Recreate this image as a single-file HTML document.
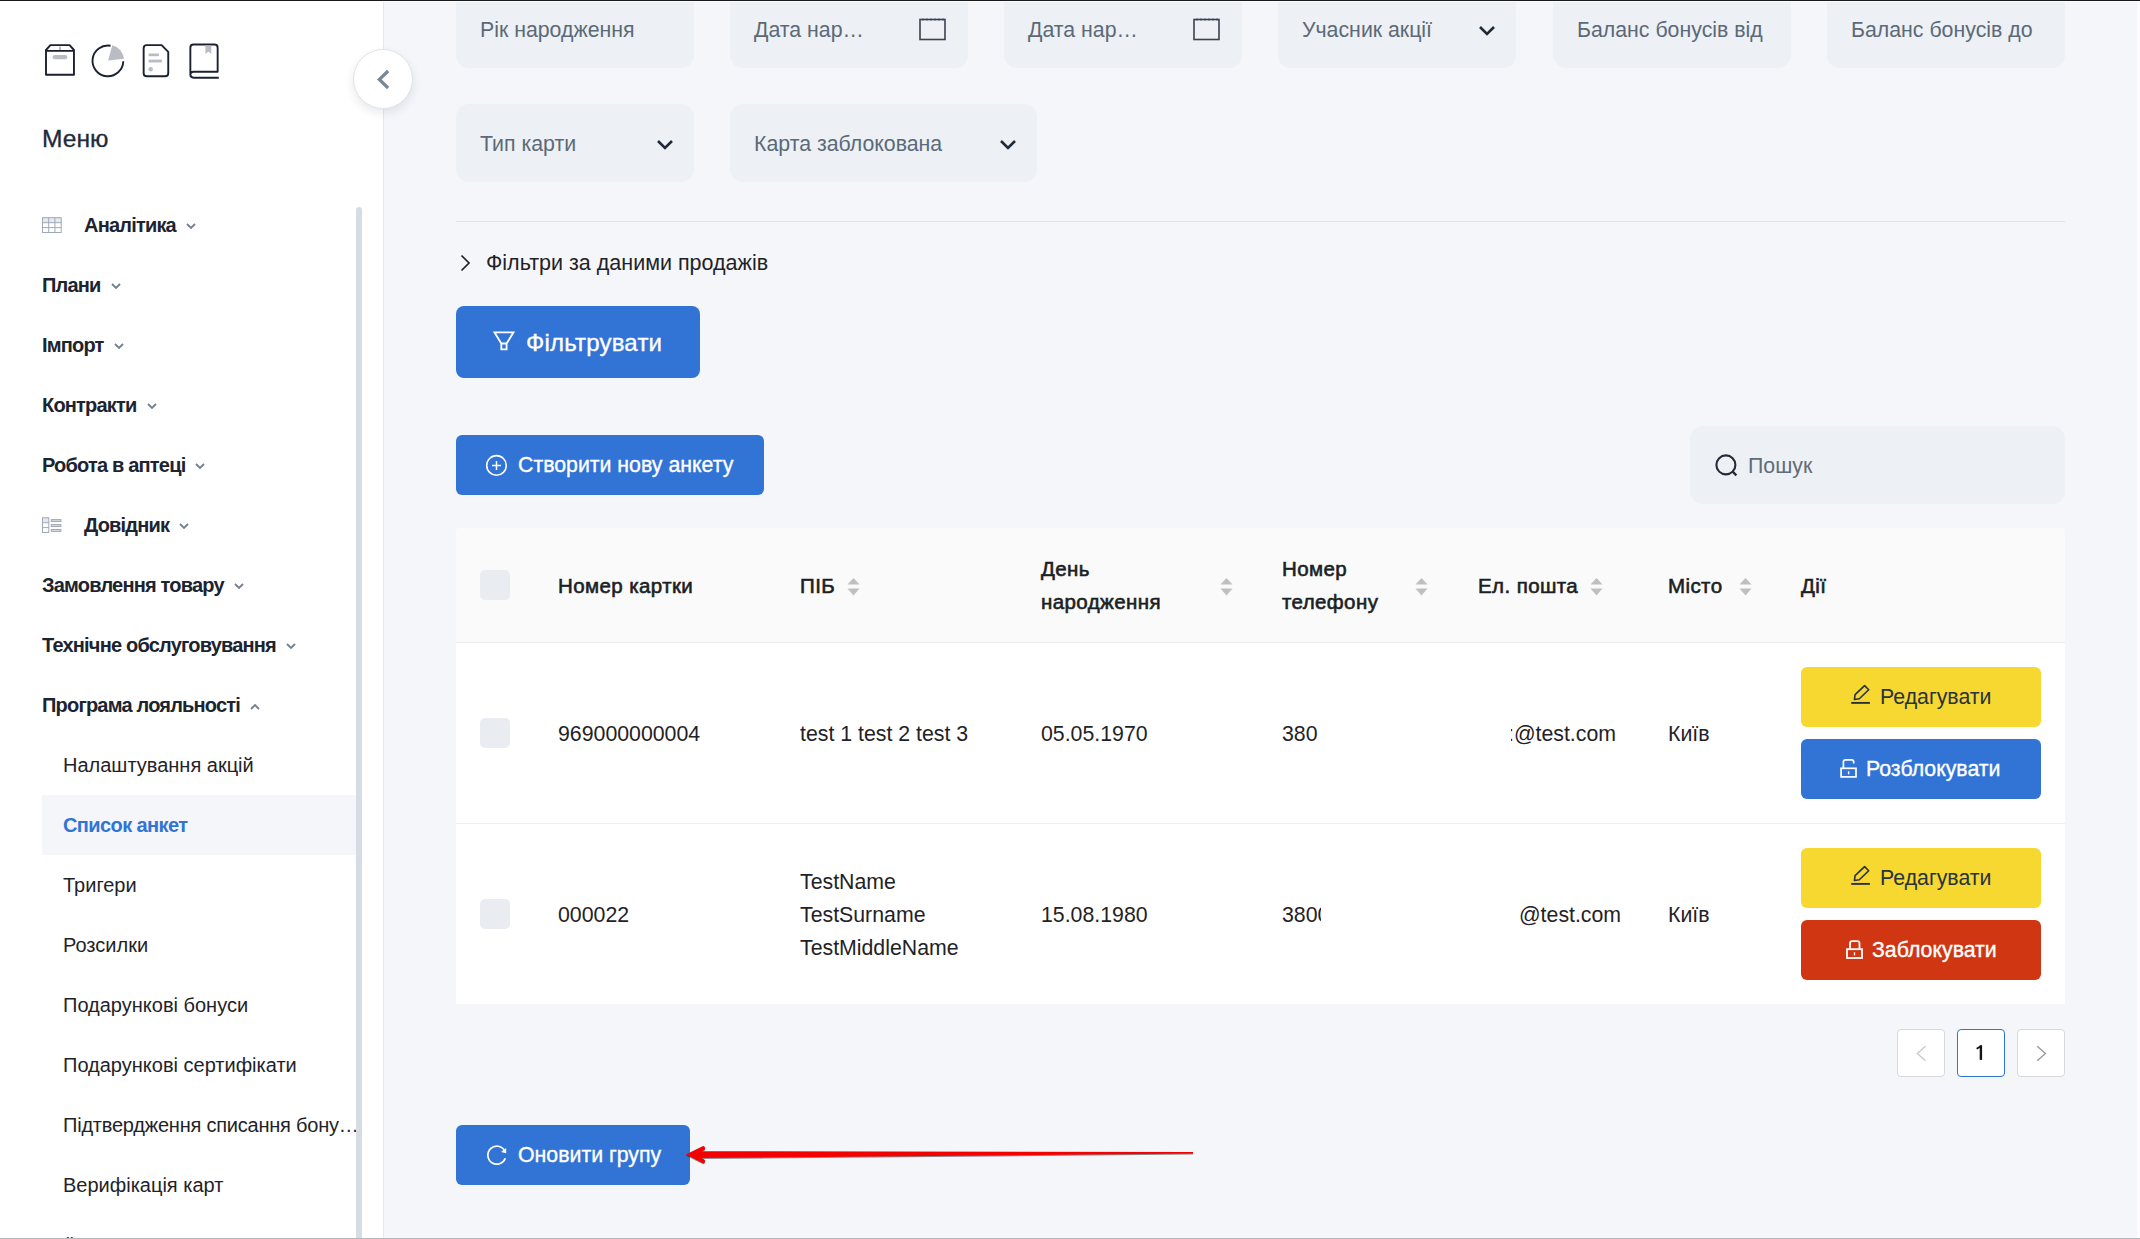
<!DOCTYPE html>
<html><head><meta charset="utf-8">
<style>
*{box-sizing:border-box;margin:0;padding:0}
html,body{width:2140px;height:1239px;overflow:hidden;background:#f5f6fa;font-family:"Liberation Sans",sans-serif;color:#1c2230}
.abs{position:absolute}
#topline{position:absolute;left:0;top:0;width:2140px;height:1px;background:#1a1a1a;z-index:50}
#topline2{position:absolute;left:0;top:1px;width:2140px;height:1px;background:#fbfcfd;z-index:50}
#botline{position:absolute;left:0;top:1238px;width:2140px;height:1px;background:#b4b8bd;z-index:50}
#rightstrip{position:absolute;left:2137px;top:0;width:3px;height:1239px;background:#fcfcfc;z-index:40}
#sidebar{position:absolute;left:0;top:0;width:383px;height:1239px;background:#fff;border-right:1px solid #e3e8ee;width:384px}
.mi{position:absolute;left:42px;font-size:20px;font-weight:700;letter-spacing:-0.8px;color:#1c2430;white-space:nowrap;line-height:24px}
.sub{position:absolute;left:63px;font-size:20px;font-weight:400;color:#1f2328;white-space:nowrap;line-height:24px}
.cv{margin-left:10px;vertical-align:middle;position:relative;top:0px}
.chev{display:inline-block;width:7px;height:7px;border-right:1.6px solid #7d8896;border-bottom:1.6px solid #7d8896;transform:rotate(45deg);margin-left:12px;position:relative;top:-5px}
.chev.up{transform:rotate(-135deg);top:1px}
#scroll{position:absolute;left:356px;top:207px;width:6px;height:1040px;background:#d5dce4;border-radius:3px}
#collapse{position:absolute;left:353px;top:49px;width:60px;height:60px;border-radius:50%;background:#fff;border:1px solid #dfe5ec;box-shadow:0 4px 10px rgba(30,40,60,0.10);z-index:10}
.field{position:absolute;background:#edf0f4;border-radius:13px;height:78px;width:238px;color:#5b6978;font-size:21.3px;white-space:nowrap}
.field span{position:absolute;left:24px;top:28px;line-height:24px}
.btn{position:absolute;background:#3174d6;color:#fff;border-radius:7px;white-space:nowrap;-webkit-text-stroke:0.35px #fff}
.th{position:absolute;font-size:20.5px;font-weight:400;letter-spacing:0.4px;-webkit-text-stroke:0.6px #1b1f24;color:#1b1f24;white-space:nowrap;line-height:33px}
.td{position:absolute;font-size:21.3px;color:#1f2226;white-space:nowrap;line-height:33px}
.cb{position:absolute;left:480px;width:30px;height:30px;background:#e9ecf0;border-radius:5px}
.sort{position:absolute;width:12px;height:20px}
.abtn{position:absolute;left:1801px;width:240px;height:60px;border-radius:6px;font-size:21.3px;white-space:nowrap;text-align:center;line-height:60px}
.pg{position:absolute;top:1029px;width:48px;height:48px;background:#fff;border:1px solid #d9d9d9;border-radius:4px}
</style></head>
<body>
<div id="topline"></div><div id="topline2"></div><div id="botline"></div><div id="rightstrip"></div>

<!-- SIDEBAR -->
<div id="sidebar">
<svg class="abs" style="left:0;top:0" width="240" height="90" viewBox="0 0 240 90">
 <g fill="none" stroke="#1a2230" stroke-width="1.9" stroke-linejoin="round">
  <path d="M46 50 L50.4 45.15 H69.6 L73.95 50 V74.75 H46 Z M46 50.85 H73.95"/>
  <path d="M110.6 45.7 A15.4 15.4 0 1 0 123.3 61.3"/>
  <path d="M143.65 48.2 Q143.65 45.15 146.7 45.15 H161.6 L168.25 51.9 V73.2 Q168.25 76.25 165.2 76.25 H146.7 Q143.65 76.25 143.65 73.2 Z"/>
  <path d="M218.8 77.7 H193.6 Q190.35 77.7 190.35 74.6 V47.7 Q190.35 44.55 193.5 44.55 H214.5 Q217.65 44.55 217.65 47.7 V71.8 H193.6 Q190.35 71.8 190.35 74.6"/>
 </g>
 <g fill="#b9bdc3">
  <rect x="52.6" y="55.1" width="14.7" height="4.2" rx="2.1"/>
  <rect x="59" y="46.6" width="2" height="3.4"/>
  <path d="M108.1 60.6 L112.3 45.3 A16 16 0 0 1 124.1 58.7 Z"/>
  <rect x="148.6" y="53.5" width="10.3" height="2.7"/>
  <rect x="148.6" y="59.6" width="13.3" height="2.9"/>
  <circle cx="150.7" cy="69.2" r="2.2"/>
  <path d="M205.4 45.5 H211.3 V54.1 L208.35 51.6 L205.4 54.1 Z"/>
 </g>
</svg>
<div class="abs" style="left:42px;top:124px;font-size:24.6px;line-height:30px;color:#1f2a3a;-webkit-text-stroke:0.3px #1f2a3a;white-space:nowrap">Меню</div>

<svg class="abs" style="left:40px;top:215px" width="24" height="20" viewBox="40 215 24 20">
 <rect x="42.5" y="217.7" width="18.7" height="4.8" fill="#e6e9ee"/>
 <g fill="none" stroke="#a0a9b6" stroke-width="1">
  <rect x="42.5" y="217.7" width="18.7" height="14.8"/>
  <path d="M48.7 217.7 V232.5 M54.9 217.7 V232.5 M42.5 222.7 H61.2 M42.5 227.6 H61.2"/>
 </g>
</svg>
<div class="mi" style="left:84px;top:213px">Аналітика<svg class="cv" width="10" height="7" viewBox="0 0 10 7"><path d="M1 1 L5 5 L9 1" fill="none" stroke="#758190" stroke-width="1.9"/></svg></div>
<div class="mi" style="top:273px">Плани<svg class="cv" width="10" height="7" viewBox="0 0 10 7"><path d="M1 1 L5 5 L9 1" fill="none" stroke="#758190" stroke-width="1.9"/></svg></div>
<div class="mi" style="top:333px">Імпорт<svg class="cv" width="10" height="7" viewBox="0 0 10 7"><path d="M1 1 L5 5 L9 1" fill="none" stroke="#758190" stroke-width="1.9"/></svg></div>
<div class="mi" style="top:393px">Контракти<svg class="cv" width="10" height="7" viewBox="0 0 10 7"><path d="M1 1 L5 5 L9 1" fill="none" stroke="#758190" stroke-width="1.9"/></svg></div>
<div class="mi" style="top:453px">Робота в аптеці<svg class="cv" width="10" height="7" viewBox="0 0 10 7"><path d="M1 1 L5 5 L9 1" fill="none" stroke="#758190" stroke-width="1.9"/></svg></div>
<svg class="abs" style="left:40px;top:515px" width="24" height="20" viewBox="40 515 24 20">
 <rect x="42.5" y="517.8" width="6.3" height="4.8" fill="#e6e9ee"/>
 <g fill="none" stroke="#a0a9b6" stroke-width="1">
  <rect x="42.5" y="517.8" width="6.3" height="14.7"/>
  <path d="M42.5 522.7 H48.8 M42.5 527.6 H48.8"/>
  <rect x="51.3" y="519.6" width="9.6" height="1.9" fill="#d5dae1"/>
  <rect x="51.3" y="524.6" width="9.6" height="1.9" fill="#d5dae1"/>
  <rect x="51.3" y="529.5" width="9.6" height="1.9" fill="#d5dae1"/>
 </g>
</svg>
<div class="mi" style="left:84px;top:513px">Довідник<svg class="cv" width="10" height="7" viewBox="0 0 10 7"><path d="M1 1 L5 5 L9 1" fill="none" stroke="#758190" stroke-width="1.9"/></svg></div>
<div class="mi" style="top:573px">Замовлення товару<svg class="cv" width="10" height="7" viewBox="0 0 10 7"><path d="M1 1 L5 5 L9 1" fill="none" stroke="#758190" stroke-width="1.9"/></svg></div>
<div class="mi" style="top:633px">Технічне обслуговування<svg class="cv" width="10" height="7" viewBox="0 0 10 7"><path d="M1 1 L5 5 L9 1" fill="none" stroke="#758190" stroke-width="1.9"/></svg></div>
<div class="mi" style="top:693px">Програма лояльності<svg class="cv" width="10" height="7" viewBox="0 0 10 7"><path d="M1 6 L5 2 L9 6" fill="none" stroke="#758190" stroke-width="1.9"/></svg></div>
<div class="sub" style="top:753px">Налаштування акцій</div>
<div class="abs" style="left:42px;top:795px;width:314px;height:60px;background:#f5f6fa"></div>
<div class="sub" style="top:813px;color:#3174d6;font-weight:700;letter-spacing:-0.6px">Список анкет</div>
<div class="sub" style="top:873px">Тригери</div>
<div class="sub" style="top:933px">Розсилки</div>
<div class="sub" style="top:993px">Подарункові бонуси</div>
<div class="sub" style="top:1053px">Подарункові сертифікати</div>
<div class="sub" style="top:1113px;letter-spacing:-0.22px">Підтвердження списання бону…</div>
<div class="sub" style="top:1173px">Верифікація карт</div>
<div class="sub" style="top:1235px;left:67px">Їжа</div>
</div>
<div id="scroll"></div>
<div id="collapse"><svg class="abs" style="left:0;top:0" width="60" height="60" viewBox="354 50 60 60"><path d="M388.1 71 L379.3 79.5 L388.1 88" fill="none" stroke="#7a8796" stroke-width="3.2"/></svg></div>

<!-- MAIN -->
<div id="main">
<div class="field" style="left:456px;top:-10px"><span>Рік народження</span></div>
<div class="field" style="left:730px;top:-10px"><span>Дата нар…</span><div class="abs" style="left:189px;top:27px"><svg class="abs" width="28" height="24" viewBox="0 0 28 24"><rect x="1" y="2.5" width="25" height="20" fill="none" stroke="#3a4350" stroke-width="1.6"/><path d="M4 1.5 V3.5 M8 1.5 V3.5 M12 1.5 V3.5 M16 1.5 V3.5 M20 1.5 V3.5 M24 1.5 V3.5" stroke="#3a4350" stroke-width="1.2"/></svg></div></div>
<div class="field" style="left:1004px;top:-10px"><span>Дата нар…</span><div class="abs" style="left:189px;top:27px"><svg class="abs" width="28" height="24" viewBox="0 0 28 24"><rect x="1" y="2.5" width="25" height="20" fill="none" stroke="#3a4350" stroke-width="1.6"/><path d="M4 1.5 V3.5 M8 1.5 V3.5 M12 1.5 V3.5 M16 1.5 V3.5 M20 1.5 V3.5 M24 1.5 V3.5" stroke="#3a4350" stroke-width="1.2"/></svg></div></div>
<div class="field" style="left:1278px;top:-10px"><span>Учасник акції</span><div class="abs" style="left:200px;top:35px"><svg class="abs" width="18" height="12" viewBox="0 0 18 12"><path d="M2 2 L9 9 L16 2" fill="none" stroke="#1f2a38" stroke-width="2.6"/></svg></div></div>
<div class="field" style="left:1553px;top:-10px"><span>Баланс бонусів від</span></div>
<div class="field" style="left:1827px;top:-10px"><span>Баланс бонусів до</span></div>
<div class="field" style="left:456px;top:104px"><span>Тип карти</span><div class="abs" style="left:200px;top:35px"><svg class="abs" width="18" height="12" viewBox="0 0 18 12"><path d="M2 2 L9 9 L16 2" fill="none" stroke="#1f2a38" stroke-width="2.6"/></svg></div></div>
<div class="field" style="left:730px;top:104px;width:307px"><span>Карта заблокована</span><div class="abs" style="left:269px;top:35px"><svg class="abs" width="18" height="12" viewBox="0 0 18 12"><path d="M2 2 L9 9 L16 2" fill="none" stroke="#1f2a38" stroke-width="2.6"/></svg></div></div>
<div class="abs" style="left:456px;top:221px;width:1609px;height:1px;background:#dfe3e8"></div>
<svg class="abs" style="left:456px;top:253px" width="20" height="20" viewBox="0 0 20 20"><path d="M5.5 2.5 L13 10 L5.5 17.5" fill="none" stroke="#1f2226" stroke-width="1.7"/></svg>
<div class="abs" style="left:486px;top:250px;font-size:21.5px;line-height:26px;color:#1f2226;white-space:nowrap">Фільтри за даними продажів</div>

<div class="btn" style="left:456px;top:306px;width:244px;height:72px;border-radius:8px">
 <svg class="abs" style="left:0;top:0" width="244" height="72" viewBox="456 306 244 72"><path d="M494.5 332.3 H513.5 L506.6 343.5 V349.3 H501.3 V343.5 Z M501.3 343.5 H506.6" fill="none" stroke="#fff" stroke-width="1.8" stroke-linejoin="miter"/></svg>
 <div class="abs" style="left:70px;top:22px;font-size:24px;line-height:30px;letter-spacing:0.2px">Фільтрувати</div>
</div>
<div class="btn" style="left:456px;top:435px;width:308px;height:60px;border-radius:6px">
 <svg class="abs" style="left:0;top:0" width="60" height="60" viewBox="456 435 60 60"><circle cx="496.5" cy="465.4" r="9.8" fill="none" stroke="#fff" stroke-width="1.6"/><path d="M492 465.4 H501 M496.5 460.9 V469.9" stroke="#fff" stroke-width="1.5"/></svg>
 <div class="abs" style="left:62px;top:17px;font-size:21.3px;line-height:26px">Створити нову анкету</div>
</div>
<div class="abs" style="left:1690px;top:426px;width:375px;height:78px;background:#edf0f4;border-radius:13px">
 <svg class="abs" style="left:0;top:0" width="60" height="78" viewBox="1690 426 60 78"><circle cx="1725.9" cy="464.9" r="9.5" fill="none" stroke="#222b38" stroke-width="2.1"/><path d="M1732.6 471.6 L1736.4 475.4" stroke="#222b38" stroke-width="2.3"/></svg>
 <div class="abs" style="left:58px;top:27px;font-size:21.3px;line-height:26px;color:#5f6c7b">Пошук</div>
</div>

<!-- TABLE -->
<div class="abs" style="left:456px;top:528px;width:1609px;height:114px;background:#fafafa;border-radius:4px 4px 0 0"></div>
<div class="abs" style="left:456px;top:642px;width:1609px;height:1px;background:#ececec"></div>
<div class="abs" style="left:456px;top:643px;width:1609px;height:180px;background:#fff"></div>
<div class="abs" style="left:456px;top:823px;width:1609px;height:1px;background:#efefef"></div>
<div class="abs" style="left:456px;top:824px;width:1609px;height:180px;background:#fff"></div>

<div class="cb" style="top:570px"></div>
<div class="th" style="left:558px;top:569px;line-height:33.4px">Номер картки</div>
<div class="th" style="left:800px;top:569px;line-height:33.4px">ПІБ</div><svg class="abs" style="left:847px;top:577px" width="13" height="19" viewBox="0 0 13 19"><path d="M0.5 7.6 L6.5 1 L12.5 7.6 Z M0.5 11.6 L6.5 18.4 L12.5 11.6 Z" fill="#bfbfbf"/></svg>
<div class="th" style="left:1041px;top:552px;line-height:33.4px">День<br>народження</div><svg class="abs" style="left:1220px;top:577px" width="13" height="19" viewBox="0 0 13 19"><path d="M0.5 7.6 L6.5 1 L12.5 7.6 Z M0.5 11.6 L6.5 18.4 L12.5 11.6 Z" fill="#bfbfbf"/></svg>
<div class="th" style="left:1282px;top:552px;line-height:33.4px">Номер<br>телефону</div><svg class="abs" style="left:1415px;top:577px" width="13" height="19" viewBox="0 0 13 19"><path d="M0.5 7.6 L6.5 1 L12.5 7.6 Z M0.5 11.6 L6.5 18.4 L12.5 11.6 Z" fill="#bfbfbf"/></svg>
<div class="th" style="left:1478px;top:569px;line-height:33.4px">Ел. пошта</div><svg class="abs" style="left:1590px;top:577px" width="13" height="19" viewBox="0 0 13 19"><path d="M0.5 7.6 L6.5 1 L12.5 7.6 Z M0.5 11.6 L6.5 18.4 L12.5 11.6 Z" fill="#bfbfbf"/></svg>
<div class="th" style="left:1668px;top:569px;line-height:33.4px">Місто</div><svg class="abs" style="left:1739px;top:577px" width="13" height="19" viewBox="0 0 13 19"><path d="M0.5 7.6 L6.5 1 L12.5 7.6 Z M0.5 11.6 L6.5 18.4 L12.5 11.6 Z" fill="#bfbfbf"/></svg>
<div class="th" style="left:1801px;top:569px;line-height:33.4px">Дії</div>

<div class="cb" style="top:718px"></div>
<div class="td" style="left:558px;top:718px">969000000004</div>
<div class="td" style="left:800px;top:718px">test 1 test 2 test 3</div>
<div class="td" style="left:1041px;top:718px">05.05.1970</div>
<div class="td" style="left:1282px;top:718px">380</div>
<div class="abs" style="left:1511px;top:718px;width:110px;height:33px;overflow:hidden"><div class="td" style="left:-3px;top:0">:@test.com</div></div>
<div class="td" style="left:1668px;top:718px">Київ</div>
<div class="abtn" style="top:667px;background:#f6d830;color:#2a323c"><svg class="abs" style="left:47px;top:16px" width="26" height="26" viewBox="1848 683 26 26"><g fill="none" stroke="#28313f" stroke-width="1.6" stroke-linejoin="round"><path d="M1854.4 699.5 L1855.1 694.6 L1864.6 685.6 L1868.7 689.7 L1859.3 698.8 Z"/></g><path d="M1851.2 702.9 H1869.9" stroke="#28313f" stroke-width="1.9"/></svg><span style="position:absolute;left:79px;top:0">Редагувати</span></div>
<div class="abtn" style="top:739px;background:#3174d6;color:#fff">
 <svg class="abs" style="left:0;top:0" width="80" height="60" viewBox="1801 739 80 60"><path d="M1843.4 768.3 V762 Q1843.4 759.9 1845.5 759.9 H1851.6 Q1853.7 759.9 1853.7 762 V763.6" fill="none" stroke="#fff" stroke-width="1.7"/><rect x="1841.1" y="768.3" width="14.9" height="8.6" fill="none" stroke="#fff" stroke-width="1.7"/><path d="M1848.6 771.3 V774.3" stroke="#fff" stroke-width="1.4"/></svg>
 <span style="position:absolute;left:65px;top:0;-webkit-text-stroke:0.35px #fff">Розблокувати</span></div>

<div class="cb" style="top:899px"></div>
<div class="td" style="left:558px;top:899px">000022</div>
<div class="td" style="left:800px;top:866px">TestName<br>TestSurname<br>TestMiddleName</div>
<div class="td" style="left:1041px;top:899px">15.08.1980</div>
<div class="abs" style="left:1282px;top:899px;width:39px;height:33px;overflow:hidden"><div class="td" style="left:0;top:0">3800</div></div>
<div class="td" style="left:1519px;top:899px">@test.com</div>
<div class="td" style="left:1668px;top:899px">Київ</div>
<div class="abtn" style="top:848px;background:#f6d830;color:#2a323c"><svg class="abs" style="left:47px;top:16px" width="26" height="26" viewBox="1848 864 26 26"><g fill="none" stroke="#28313f" stroke-width="1.6" stroke-linejoin="round"><path d="M1854.4 880.5 L1855.1 875.6 L1864.6 866.6 L1868.7 870.7 L1859.3 879.8 Z"/></g><path d="M1851.2 883.9 H1869.9" stroke="#28313f" stroke-width="1.9"/></svg><span style="position:absolute;left:79px;top:0">Редагувати</span></div>
<div class="abtn" style="top:920px;background:#d03612;color:#fff">
 <svg class="abs" style="left:0;top:0" width="80" height="60" viewBox="1801 920 80 60"><path d="M1850 949.2 V943.4 Q1850 941.1 1852.3 941.1 H1857.2 Q1859.5 941.1 1859.5 943.4 V949.2" fill="none" stroke="#fff" stroke-width="1.8"/><rect x="1847" y="949.2" width="15" height="8.8" fill="none" stroke="#fff" stroke-width="1.8"/><path d="M1854.5 952.3 V955.4" stroke="#fff" stroke-width="1.4"/></svg>
 <span style="position:absolute;left:71px;top:0;-webkit-text-stroke:0.35px #fff">Заблокувати</span></div>

<!-- PAGINATION -->
<div class="pg" style="left:1897px"><svg class="abs" style="left:0;top:0" width="48" height="48" viewBox="1897 1029 48 48"><path d="M1924.5 1045.2 L1916.3 1052.5 L1924.5 1059.8" fill="none" stroke="#c9c9c9" stroke-width="1.4"/></svg></div>
<div class="pg" style="left:1957px;border:1.6px solid #3174d6"><svg class="abs" style="left:-1.6px;top:-1.6px" width="48" height="48" viewBox="1957 1029 48 48"><path d="M1981.9 1046.3 V1060.9" stroke="#141414" stroke-width="2.4"/><path d="M1977.6 1049.7 L1982.6 1046.9" stroke="#141414" stroke-width="1.8"/></svg></div>
<div class="pg" style="left:2017px"><svg class="abs" style="left:0;top:0" width="48" height="48" viewBox="2017 1029 48 48"><path d="M2036.2 1045.2 L2044.4 1052.5 L2036.2 1059.8" fill="none" stroke="#9a9a9a" stroke-width="1.4"/></svg></div>

<!-- UPDATE GROUP -->
<div class="btn" style="left:456px;top:1125px;width:234px;height:60px;border-radius:6px">
 <svg class="abs" style="left:0;top:0" width="60" height="60" viewBox="456 1125 60 60"><path d="M504.6 1150.6 A9 9 0 1 0 505.3 1158.3" fill="none" stroke="#fff" stroke-width="1.7"/><path d="M506.2 1147.9 L506.2 1153.2 L501 1152 Z" fill="#fff"/></svg>
 <div class="abs" style="left:62px;top:17px;font-size:21.3px;line-height:26px">Оновити групу</div>
</div>
<svg class="abs" style="left:680px;top:1135px;filter:drop-shadow(0 1px 0.6px rgba(0,0,0,0.45))" width="520" height="40" viewBox="680 1135 520 40">
 <path d="M693 1151.2 L1193 1151.9 L1193 1153.6 L693 1158.1 Z" fill="#f40000"/>
 <path d="M703 1148.3 L690.5 1154.6 L703 1161" fill="none" stroke="#f40000" stroke-width="4.2" stroke-linecap="round" stroke-linejoin="miter"/>
</svg>
</div>
</body></html>
